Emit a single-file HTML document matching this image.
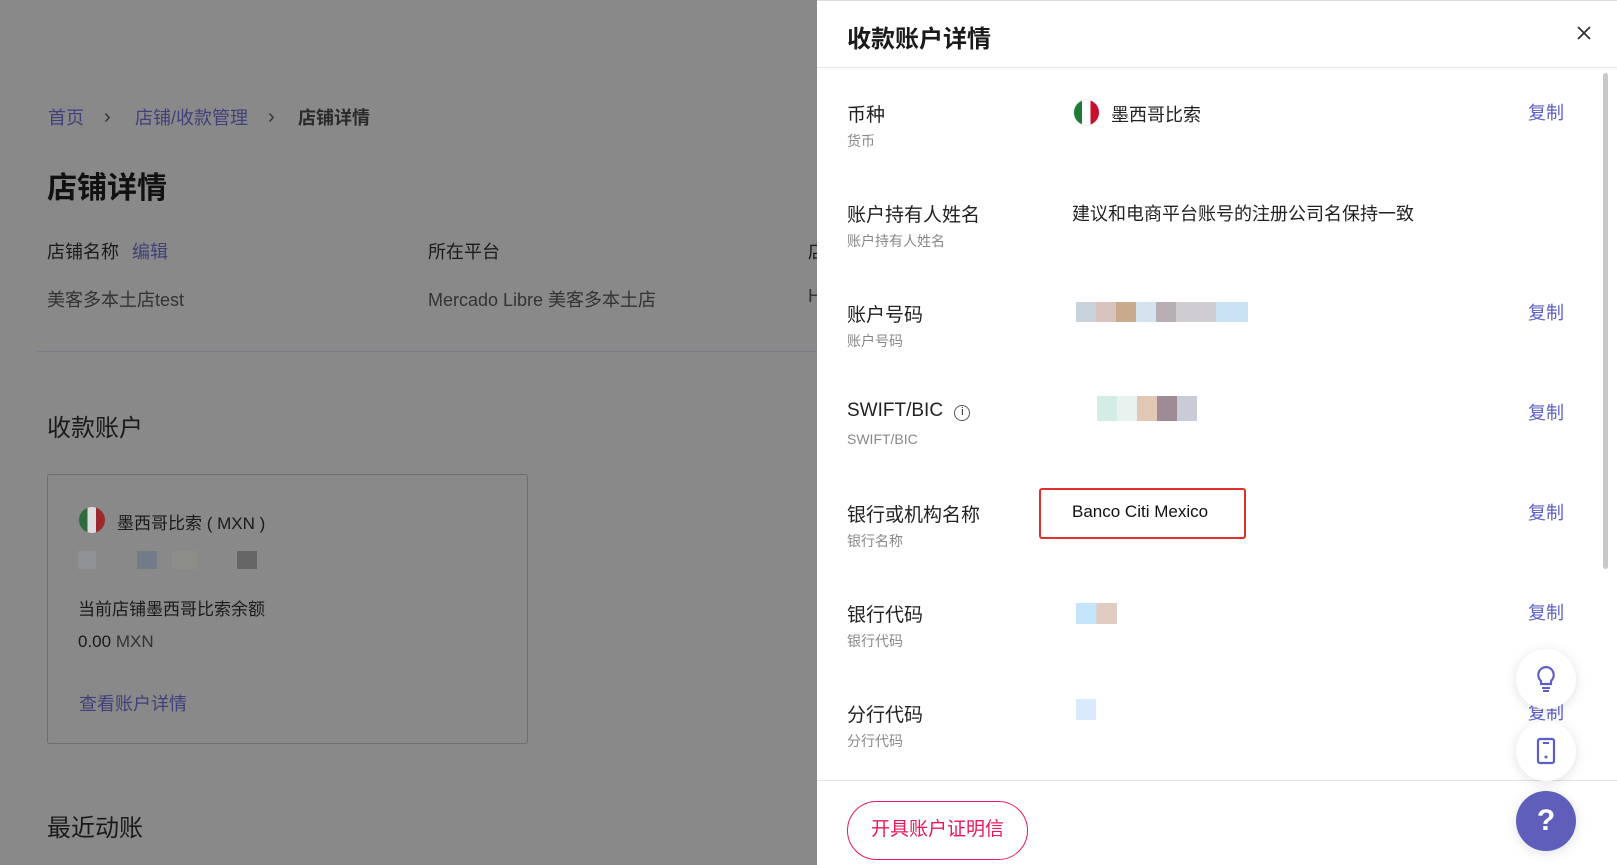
<!DOCTYPE html>
<html><head><meta charset="utf-8"><style>
*{margin:0;padding:0;box-sizing:border-box}
body{width:1617px;height:865px;overflow:hidden;font-family:"Liberation Sans","Noto Sans CJK SC",sans-serif;background:#898989;position:relative}
.a{position:absolute;white-space:nowrap}
.lk{color:#40407a}
.dr{position:absolute;left:817px;top:0;width:800px;height:865px;background:#fff;border-top:1px solid #ddd}
.lab{font-size:19px;color:#222}
.sub{font-size:14px;color:#888}
.cp{font-size:18px;color:#5b5fc7}
.fab{position:absolute;width:60px;height:60px;border-radius:50%;background:#fff;box-shadow:0 2px 12px rgba(0,0,0,.12);display:flex;align-items:center;justify-content:center}
.pix{position:absolute}
</style></head><body>
<div class="a lk" style="left:48px;top:104px;font-size:18px">首页</div>
<div class="a" style="left:104px;top:106px;font-size:20px;color:#333">›</div>
<div class="a lk" style="left:135px;top:104px;font-size:18px">店铺/收款管理</div>
<div class="a" style="left:268px;top:106px;font-size:20px;color:#333">›</div>
<div class="a" style="left:298px;top:104px;font-size:18px;color:#2a2a2a;font-weight:bold">店铺详情</div>
<div class="a" style="left:47px;top:163px;font-size:30px;color:#111;font-weight:bold">店铺详情</div>
<div class="a" style="left:47px;top:238px;font-size:18px;color:#1a1a1a">店铺名称 <span class="lk" style="margin-left:8px">编辑</span></div>
<div class="a" style="left:428px;top:238px;font-size:18px;color:#1a1a1a">所在平台</div>
<div class="a" style="left:808px;top:238px;font-size:18px;color:#1a1a1a">店</div>
<div class="a" style="left:47px;top:286px;font-size:18px;color:#333">美客多本土店test</div>
<div class="a" style="left:428px;top:286px;font-size:18px;color:#333">Mercado Libre 美客多本土店</div>
<div class="a" style="left:808px;top:286px;font-size:18px;color:#333">H</div>
<div class="a" style="left:37px;top:351px;width:780px;height:1px;background:#7a7a88"></div>
<div class="a" style="left:47px;top:408px;font-size:24px;color:#1a1a1a">收款账户</div>
<div class="a" style="left:47px;top:474px;width:481px;height:270px;border:1px solid #6e6e6e;border-radius:3px"></div>
<div class="a" style="left:79px;top:507px;width:26px;height:26px;border-radius:50%;background:linear-gradient(90deg,#2f6b3e 33%,#ddd 33% 66%,#9b2a2f 66%)"></div>
<div class="a" style="left:117px;top:509px;font-size:17px;color:#1a1a1a">墨西哥比索 ( MXN )</div>
<div class="a" style="left:78px;top:551px;width:18px;height:18px;background:#8f9194"></div>
<div class="a" style="left:137px;top:551px;width:20px;height:18px;background:#737a88"></div>
<div class="a" style="left:172px;top:551px;width:25px;height:18px;background:#8d8d8a"></div>
<div class="a" style="left:237px;top:551px;width:20px;height:18px;background:#666"></div>
<div class="a" style="left:78px;top:595px;font-size:17px;color:#1a1a1a">当前店铺墨西哥比索余额</div>
<div class="a" style="left:78px;top:632px;font-size:17px;color:#1a1a1a">0.00 <span style="color:#333">MXN</span></div>
<div class="a lk" style="left:79px;top:690px;font-size:18px">查看账户详情</div>
<div class="a" style="left:47px;top:808px;font-size:24px;color:#1a1a1a">最近动账</div>

<div class="dr">
<div class="a" style="left:30px;top:18px;font-size:24px;font-weight:bold;color:#1a1a1a">收款账户详情</div>
<svg class="a" style="left:759px;top:24px" width="16" height="16" viewBox="0 0 16 16"><path d="M2 2L14 14M14 2L2 14" stroke="#333" stroke-width="1.8"/></svg>
<div class="a" style="left:0;top:66px;width:800px;height:1px;background:#e8e8e8"></div>
<div class="a" style="left:786px;top:72px;width:5px;height:496px;border-radius:3px;background:#c8c8c8"></div>

<div class="a lab" style="left:30px;top:99px">币种</div><div class="a sub" style="left:30px;top:130px">货币</div>
<div class="a" style="left:256px;top:98px;width:27px;height:27px;border-radius:50%;background:linear-gradient(90deg,#1f7a3a 33%,#fff 33% 66%,#c8102e 66%);border:1px solid #eee"></div>
<div class="a" style="left:294px;top:100px;font-size:18px;color:#222">墨西哥比索</div>
<div class="a cp" style="left:711px;top:98px">复制</div>

<div class="a lab" style="left:30px;top:199px">账户持有人姓名</div><div class="a sub" style="left:30px;top:230px">账户持有人姓名</div>
<div class="a" style="left:255px;top:199px;font-size:18px;color:#222">建议和电商平台账号的注册公司名保持一致</div>

<div class="a lab" style="left:30px;top:299px">账户号码</div><div class="a sub" style="left:30px;top:330px">账户号码</div>
<div class="pix" style="left:259px;top:301px;width:172px;height:20px;background:linear-gradient(90deg,#c9d3dc 0 20px,#d9c4bd 20px 40px,#c9a98c 40px 60px,#d5e3ef 60px 80px,#b8aeb4 80px 100px,#cfcdd1 100px 140px,#c8e2f4 140px)"></div>
<div class="a cp" style="left:711px;top:298px">复制</div>

<div class="a lab" style="left:30px;top:399px">SWIFT/BIC <span style="display:inline-block;width:16px;height:16px;border:1.5px solid #555;border-radius:50%;font-size:11px;text-align:center;line-height:13px;margin-left:6px;vertical-align:1px">i</span></div><div class="a sub" style="left:30px;top:430px">SWIFT/BIC</div>
<div class="pix" style="left:280px;top:395px;width:100px;height:25px;background:linear-gradient(90deg,#d3ece6 0 20px,#e8f2ef 20px 40px,#e0c7b6 40px 60px,#9f8b96 60px 80px,#c9ccd6 80px)"></div>
<div class="a cp" style="left:711px;top:398px">复制</div>

<div class="a lab" style="left:30px;top:499px">银行或机构名称</div><div class="a sub" style="left:30px;top:530px">银行名称</div>
<div class="a" style="left:222px;top:487px;width:207px;height:51px;border:2.5px solid #e0302a;border-radius:3px"></div>
<div class="a" style="left:255px;top:501px;font-size:17px;color:#111">Banco Citi Mexico</div>
<div class="a cp" style="left:711px;top:498px">复制</div>

<div class="a lab" style="left:30px;top:599px">银行代码</div><div class="a sub" style="left:30px;top:630px">银行代码</div>
<div class="pix" style="left:259px;top:602px;width:41px;height:21px;background:linear-gradient(90deg,#c5e6fa 50%,#e2cbc1 50%)"></div>
<div class="a cp" style="left:711px;top:598px">复制</div>

<div class="a lab" style="left:30px;top:699px">分行代码</div><div class="a sub" style="left:30px;top:730px">分行代码</div>
<div class="pix" style="left:259px;top:698px;width:20px;height:21px;background:#d8eafb"></div>
<div class="a cp" style="left:711px;top:698px">复制</div>

<div class="a" style="left:0;top:779px;width:800px;height:1px;background:#e3e3e3"></div>
<div class="a" style="left:30px;top:800px;width:181px;height:59px;border:1.5px solid #e8185a;border-radius:30px;color:#e8185a;font-size:19px;text-align:center;line-height:56px">开具账户证明信</div>

<div class="fab" style="left:699px;top:648px"><svg width="26" height="30" viewBox="0 0 26 30"><path d="M13 3a8 8 0 0 0-5 14v3h10v-3a8 8 0 0 0-5-14z" fill="none" stroke="#5b5fc7" stroke-width="2.2"/><path d="M9 24h8M10 27h6" stroke="#5b5fc7" stroke-width="2"/></svg></div>
<div class="fab" style="left:699px;top:720px"><svg width="24" height="30" viewBox="0 0 24 30"><rect x="4" y="3" width="16" height="24" rx="2" fill="none" stroke="#5b5fc7" stroke-width="2.2"/><path d="M9 7h6" stroke="#5b5fc7" stroke-width="2"/><circle cx="12" cy="21" r="1.5" fill="#5b5fc7"/></svg></div>
<div class="fab" style="left:699px;top:790px;background:#5f5fbb;color:#fff;font-size:30px;font-weight:bold">?</div>
</div>
</body></html>
